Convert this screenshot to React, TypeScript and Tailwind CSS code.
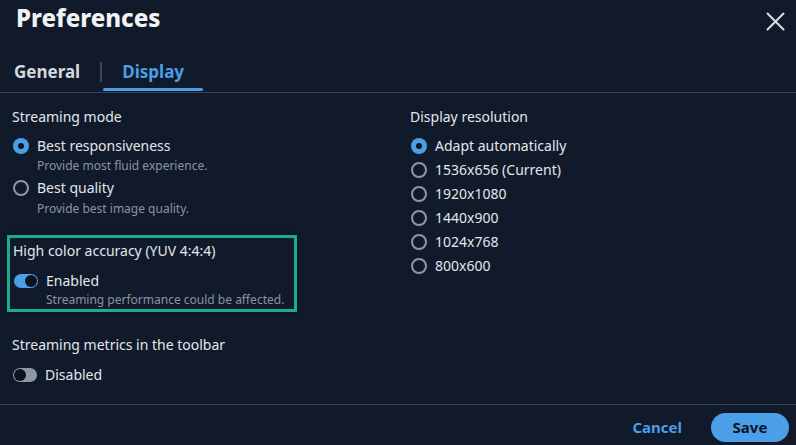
import React from 'react';

const Radio = ({ checked }: { checked?: boolean }) =>
  checked ? (
    <span className="w-[16px] h-[16px] rounded-full bg-[#4b9fe6] flex items-center justify-center shrink-0">
      <span className="w-[6px] h-[6px] rounded-full bg-[#0c1422]" />
    </span>
  ) : (
    <span className="w-[16px] h-[16px] rounded-full border-2 border-[#8e97a4] shrink-0" />
  );

const Toggle = ({ on }: { on?: boolean }) => (
  <span
    className={`w-[24px] h-[14px] rounded-full flex items-center px-[1px] shrink-0 ${
      on ? 'bg-[#4b9fe6] justify-end' : 'bg-[#8e97a4] justify-start'
    }`}
  >
    <span className="w-[12px] h-[12px] rounded-full bg-[#0b1220]" />
  </span>
);

const resolutions = ['Adapt automatically', '1536x656 (Current)', '1920x1080', '1440x900', '1024x768', '800x600'];

export default function App() {
  return (
    <div
      className="w-[796px] h-[445px] bg-[#111a2a] text-[#e3e6ea] flex flex-col overflow-hidden"
      style={{ fontFamily: '"Noto Sans", "Open Sans", sans-serif' }}
    >
      {/* header */}
      <div className="flex items-start justify-between pl-[16px] pr-[11px] pt-[2px] h-[58px]">
        <h1 className="text-[24px] leading-[32px] font-extrabold text-[#f1f2f4]">Preferences</h1>
        <button className="mt-[10px] text-[#d9dce0]">
          <svg width="19" height="19" viewBox="0 0 19 19" fill="none" stroke="currentColor" strokeWidth="2" strokeLinecap="round">
            <path d="M1.5 1.5 L17.5 17.5 M17.5 1.5 L1.5 17.5" />
          </svg>
        </button>
      </div>

      {/* tabs */}
      <div className="h-[35px] border-b border-[#3a4250] flex items-stretch pl-[14px]">
        <div className="flex items-center text-[17px] font-bold text-[#d5d8dc] pb-[6px]">General</div>
        <div className="w-[2px] bg-[#3c4553] h-[20px] ml-[20px] mt-[4px]" />
        <div className="ml-[1px] flex flex-col justify-between w-[100px]">
          <div className="flex-1 flex items-center justify-center text-[17px] font-bold text-[#4b9fe6] pb-[2px]">Display</div>
          <div className="h-[3px] rounded-full bg-[#4b9fe6] mb-[1px]" />
        </div>
      </div>

      {/* content */}
      <div className="h-[311px] flex pt-[14px]">
        <div className="w-[410px] pl-[12px] flex flex-col">
          <div className="text-[14px] leading-5">Streaming mode</div>
          <div className="mt-[9px] flex items-center gap-[8px] text-[14px] leading-5 pl-[1px]">
            <Radio checked />
            <span>Best responsiveness</span>
          </div>
          <div className="mt-[2px] pl-[25px] text-[12px] leading-4 text-[#8b94a1]">Provide most fluid experience.</div>
          <div className="mt-[4px] flex items-center gap-[8px] text-[14px] leading-5 pl-[1px]">
            <Radio />
            <span>Best quality</span>
          </div>
          <div className="mt-[3px] pl-[25px] text-[12px] leading-4 text-[#8b94a1]">Provide best image quality.</div>

          <div className="mt-[18px] -ml-[5px] w-[290px] border-[3px] border-[#16ae8e] pl-[3px] pt-[3px] pb-[1px] shadow-[0_0_3px_rgba(0,0,0,0.6)]">
            <div className="text-[14px] leading-5">High color accuracy (YUV 4:4:4)</div>
            <div className="mt-[10px] flex items-center gap-[8px] text-[14px] leading-5 pl-[1px]">
              <Toggle on />
              <span>Enabled</span>
            </div>
            <div className="mt-[1px] pl-[33px] text-[12px] leading-4 text-[#8b94a1]">Streaming performance could be affected.</div>
          </div>

          <div className="mt-[23px] text-[14px] leading-5">Streaming metrics in the toolbar</div>
          <div className="mt-[10px] flex items-center gap-[8px] text-[14px] leading-5 pl-[1px]">
            <Toggle />
            <span>Disabled</span>
          </div>
        </div>

        <div className="flex-1 flex flex-col">
          <div className="text-[14px] leading-5">Display resolution</div>
          <div className="mt-[9px] flex flex-col gap-[4px]">
            {resolutions.map((r, i) => (
              <div key={r} className="flex items-center gap-[8px] text-[14px] leading-5 pl-[1px]">
                <Radio checked={i === 0} />
                <span>{r}</span>
              </div>
            ))}
          </div>
        </div>
      </div>

      {/* footer */}
      <div className="flex-1 border-t border-[#3a4250] flex items-start justify-end pt-[8px] pr-[7px] gap-[29px]">
        <button className="h-[29px] text-[15px] font-bold text-[#4b9fe6]">Cancel</button>
        <button className="h-[29px] w-[78px] rounded-full bg-[#4b9fe6] text-[15px] font-bold text-[#0d1524]">Save</button>
      </div>
    </div>
  );
}
